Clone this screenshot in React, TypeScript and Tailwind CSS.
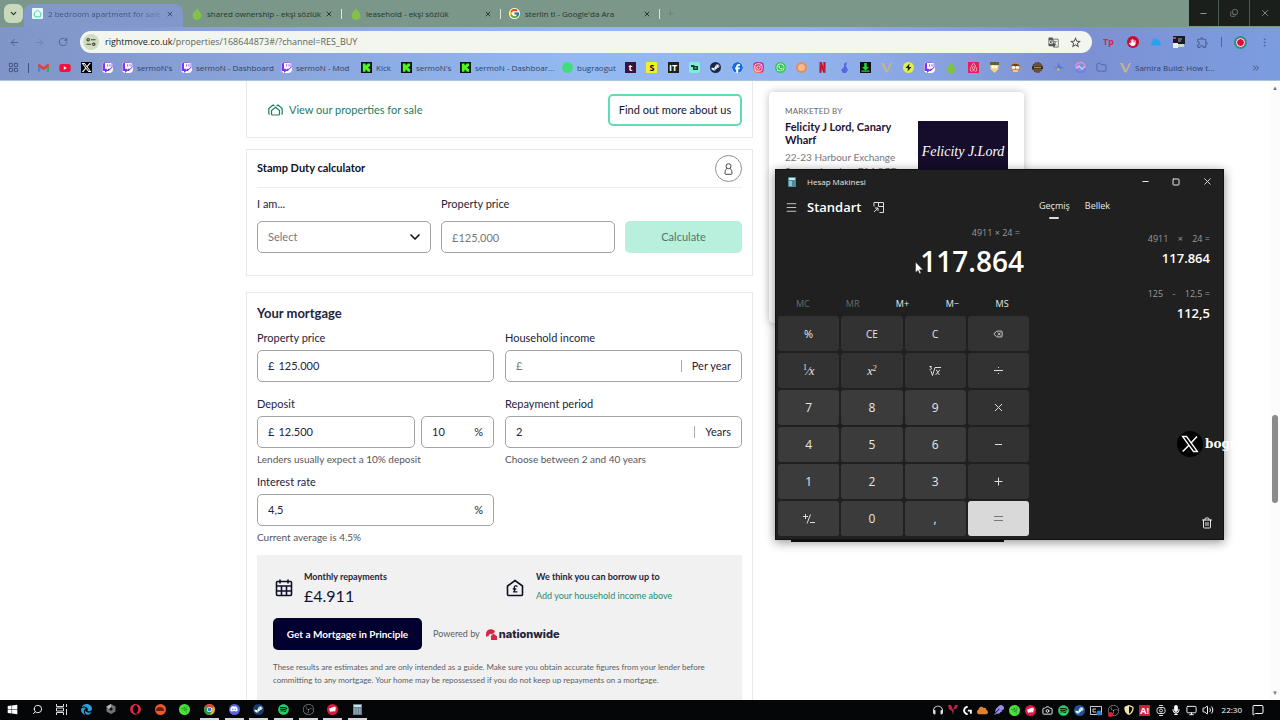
import { useId, type ReactNode } from "react";
import {
  FaTwitch, FaYoutube, FaSteamSymbol, FaFacebook, FaInstagram, FaWhatsapp, FaAirbnb, FaXTwitter,
  FaEdge, FaOpera, FaDiscord, FaSpotify, FaWindows, FaMicrophone, FaFeather, FaCloud, FaHand,
  FaHeadphones, FaShieldHalved,
} from "react-icons/fa6";
import { FcGoogle } from "react-icons/fc";
import { MdGTranslate, MdOutlineExtension, MdStarOutline } from "react-icons/md";
import { SiObsstudio, SiRazer, SiNetflix, SiLogitechg } from "react-icons/si";
import {
  ArrowLeft, ArrowRight, RotateCw, ChevronDown, X, Plus, Minus, Copy, Folder, ChevronsRight, Menu,
  Square, Trash2, Search, MessageSquare, Volume2, Monitor, MoreVertical, LayoutGrid, Camera, Delete,
} from "lucide-react";

/* ---------- shared icon drawings ---------- */

const Kick = () => (
  <svg viewBox="0 0 12 12" className="size-[11px] shrink-0">
    <rect width="12" height="12" fill="#111" />
    <path d="M2 1.500h3v2h1v-1h1v-1h3v3H9v1H8v1h1v1h1v3H7v-1H6v-1H5v2H2z" fill="#4dfa1b" />
  </svg>
);
const Drop = () => (
  <svg viewBox="0 0 12 12" className="size-[12px] shrink-0">
    <path d="M6 0C7 2.500 10.500 4.600 10.500 7.600a4.500 4.400 0 0 1-9 0C1.500 4.600 5 2.500 6 0z" fill="#81c14b" />
  </svg>
);
const House = () => (
  <svg viewBox="0 0 11 11" className="size-[11px] shrink-0">
    <rect width="11" height="11" rx="1" fill="#eefaf8" />
    <path d="M2.300 8.800H8a.8.800 0 0 0 .8-.8V5L5.500 2.200 2.200 5v3" fill="none" stroke="#35d6b0" strokeWidth="1" />
  </svg>
);
const Gmail = () => (
  <svg viewBox="0 0 12 10" className="h-[10px] w-[11px] shrink-0">
    <path d="M0 2v7h2.500V4z" fill="#4a82ea" />
    <path d="M12 2v7H9.500V4z" fill="#3ba55c" />
    <path d="M0 1.800C0 .8 1.300.2 2.200.9L6 4 9.800.9c.9-.7 2.200-.1 2.200.9v1.500L6 7.500 0 3.300z" fill="#df4438" />
  </svg>
);
const Tune = () => (
  <svg viewBox="0 0 10 10" className="size-[10px]" fill="none" stroke="#3b4438" strokeWidth="1.100">
    <circle cx="2.200" cy="2.700" r="1.200" /><path d="M5 2.700h4.500M.5 7.300H5" /><circle cx="7.800" cy="7.300" r="1.200" />
  </svg>
);
const Vee = () => (
  <svg viewBox="0 0 12 12" className="size-[11px] shrink-0">
    <path d="M0 1h3l3.500 8L10 1h2L7 11.500H5z" fill="#c8b48c" />
  </svg>
);
const Letter = ({ children, className }: { children: ReactNode; className: string }) => (
  <span className={`flex size-[11px] shrink-0 items-center justify-center text-[9px] leading-none font-bold ${className}`}>{children}</span>
);

/* ---------- browser chrome ---------- */

function Tab({ icon, title, active = false }: { icon: ReactNode; title: string; active?: boolean }) {
  return (
    <div className={`flex w-[159px] shrink-0 items-center ${active ? "mt-1 h-[23px] rounded-t-lg bg-[#8298cb] pb-1 text-[#3f5276]" : "h-[27px] text-[#26362f]"}`}>
      <span className="ml-2 flex size-[11px] shrink-0">{icon}</span>
      <span className={`ml-[5px] text-[8px] leading-3 whitespace-nowrap ${active ? "bg-linear-to-r from-[#3f5276] from-75% to-[#6c82b2] bg-clip-text text-transparent" : ""}`}>{title}</span>
      <button aria-label={`Close ${title}`} className="ml-auto flex w-3 justify-center"><X size={8} strokeWidth={3} /></button>
      <span className={`ml-[6px] h-[10px] w-px ${active ? "" : "bg-[#dce5dc]"}`} />
    </div>
  );
}

const Bookmark = ({ icon, children }: { icon: ReactNode; children: string }) => (
  <a href="#bookmark" className="flex items-center gap-[4px] whitespace-nowrap">{icon}{children}</a>
);
const tw = <FaTwitch className="size-[11px] shrink-0 rounded-sm bg-white text-[#7b34ef]" />;

function Chrome() {
  return (
    <header className="shrink-0 border-b border-[#a9c3da] bg-[linear-gradient(90deg,#8094c7_0%,#8ba8df_25%,#93b9f1_45%,#93b5ef_62%,#7c90d3_84%,#7b9de0_100%)] font-['Open_Sans','Noto_Sans',sans-serif] text-[#33435f]">
      <div className="flex h-[27px] bg-[#7a9789]">
        <button aria-label="Search tabs" className="mt-1 ml-1 mr-[1px] flex size-[19px] shrink-0 items-center justify-center rounded-md bg-[#c8dabb] text-[#26331f]"><ChevronDown size={9} strokeWidth={3} /></button>
        <Tab active icon={<House />} title="2 bedroom apartment for sale" />
        <Tab icon={<Drop />} title="shared ownership - ekşi sözlük" />
        <Tab icon={<Drop />} title="leasehold - ekşi sözlük" />
        <Tab icon={<FcGoogle className="size-[11px] rounded-full bg-white" />} title="sterlin tl - Google'da Ara" />
        <button aria-label="New tab" className="ml-[6px] text-[#6a8377]"><Plus size={9} /></button>
        <div className="ml-auto flex h-[26px] gap-px bg-[#4b5b52] text-[#8e9690]">
          <button aria-label="Minimise" className="flex w-[29px] items-center justify-center bg-[#1a1f1c]"><Minus size={9} strokeWidth={3} /></button>
          <button aria-label="Restore" className="flex w-[30px] items-center justify-center bg-[#1a1f1c]"><Copy size={8} className="-scale-x-100 rotate-180" /></button>
          <button aria-label="Close" className="flex w-[30px] items-center justify-center bg-[#1a1f1c]"><X size={10} /></button>
        </div>
      </div>
      <div className="flex h-[30px] items-center">
        <button aria-label="Back" className="ml-[9px] text-[#4a5f8c]"><ArrowLeft size={11} /></button>
        <button aria-label="Forward" className="ml-[14px] text-[#6d83b3]"><ArrowRight size={11} /></button>
        <button aria-label="Reload" className="ml-[13px] text-[#4a5f8c]"><RotateCw size={10} /></button>
        <div className="ml-3 flex h-[22px] flex-1 items-center rounded-full bg-[#f3f6ef] pr-[10px] pl-[3px]">
          <span className="flex size-[16px] items-center justify-center rounded-full bg-[#d0dcc1]"><Tune /></span>
          <p className="ml-[6px] flex-1 text-[9px] leading-4 text-[#5c655c]"><span className="text-[#222]">rightmove.co.uk</span>/properties/168644873#/?channel=RES_BUY</p>
          <button aria-label="Translate" className="mr-[10px] text-[#555]"><MdGTranslate size={11} /></button>
          <button aria-label="Bookmark this tab" className="text-[#444]"><MdStarOutline size={13} /></button>
        </div>
        <div className="mr-[10px] ml-[11px] flex w-[167px] items-center justify-between text-[#4d619c]">
          <span className="w-3 text-[9px] leading-3 font-bold text-[#d42a45]">Tp</span>
          <span className="flex size-[12px] items-center justify-center rounded-full bg-[#c90d2c] text-white"><FaHand size={7} /></span>
          <FaCloud size={10} className="text-[#27a2f0]" />
          <svg viewBox="0 0 12 12" className="size-3"><rect width="12" height="8" fill="#171b26" /><path d="M0 7h5v5H0z" fill="#eee" /><path d="M5 8h6v3H5z" fill="#c4dcd2" /><path d="M0 1h3v2H0z" fill="#d54242" /><path d="M5 3h4M5 5h3" stroke="#aaa" /></svg>
          <MdOutlineExtension size={13} />
          <span className="h-[10px] w-px bg-[#4d619c]" />
          <span className="size-[13px] rounded-full border-2 border-[#1d997f] bg-[#dc0d46] outline-1 -outline-offset-3 outline-white" />
          <MoreVertical size={11} />
        </div>
      </div>
      <nav aria-label="Bookmarks" className="flex h-[23px] items-center pb-[2px] pl-2 text-[8px] leading-3">
        <LayoutGrid size={11} className="text-[#40527b]" />
        <span className="mx-[9px] h-[10px] w-px bg-[#40527b]" />
        <div className="mr-[9px] flex items-center gap-[10px]">
          <Gmail />
          <FaYoutube className="size-[12px] bg-[linear-gradient(#fff,#fff)] bg-[length:4px_4px] bg-center bg-no-repeat text-[#f5103c]" />
          <FaXTwitter className="size-[11px] bg-black text-white" />
          {tw}
        </div>
        <div className="grid grid-cols-[59px_100px_80px_40px_59px_102px_63px]">
          <Bookmark icon={tw}>sermoN's</Bookmark>
          <Bookmark icon={tw}>sermoN - Dashboard</Bookmark>
          <Bookmark icon={tw}>sermoN - Mod</Bookmark>
          <Bookmark icon={<Kick />}>Kick</Bookmark>
          <Bookmark icon={<Kick />}>sermoN's</Bookmark>
          <Bookmark icon={<Kick />}>sermoN - Dashboar...</Bookmark>
          <Bookmark icon={<span className="size-[11px] rounded-full bg-[#42dc7c]" />}>bugraogut</Bookmark>
        </div>
        <div className="flex w-[482px] shrink-0 items-center justify-between">
          <Letter className="bg-[#3e123c] text-white">t</Letter>
          <Letter className="bg-[#f4ee2a] text-black">S</Letter>
          <Letter className="bg-[#211f1d] text-[8px] text-white">IT</Letter>
          <svg viewBox="0 0 11 11" className="size-[11px]"><rect width="11" height="11" rx="2" fill="#7eedd0" /><path d="M2 3h3l1 1h3v4H4V5H2z" fill="#153c35" /><path d="M5.500 5.500h2v1h-2z" fill="#7eedd0" /></svg>
          <span className="flex size-[11px] items-center justify-center rounded-full bg-[#17294a] text-white"><FaSteamSymbol size={9} /></span>
          <FaFacebook className="size-[11px] rounded-full bg-white text-[#146be4]" />
          <FaInstagram className="size-[11px] rounded-sm bg-linear-to-tr from-[#fca73b] via-[#dc2a74] to-[#963ac4] p-px text-white" />
          <FaWhatsapp className="size-[11px] rounded-full bg-[#2fcb58] p-px text-white" />
          <span className="size-[11px] rounded-full border-2 border-[#e08f57] bg-[#f4ba92]" />
          <SiNetflix className="size-[11px] text-[#c90d26]" />
          <svg viewBox="0 0 11 11" className="size-[11px]"><path d="M5 1.500 8 0 7 4 9 8 7 11H4L2 8l3-3z" fill="#5668e0" /></svg>
          <svg viewBox="0 0 11 11" className="size-[11px]"><rect width="11" height="11" fill="#0b120d" /><path d="M4.200 1h2.600v4H9L5.500 8.500 2 5h2.200zM1.500 8.500h8v1.300h-8z" fill="#2ad13f" /></svg>
          <Vee />
          <svg viewBox="0 0 11 11" className="size-[11px]"><circle cx="5.500" cy="5.500" r="5.500" fill="#dff04b" /><path d="M6.500 1.500 2.500 6H5l-.5 3.500L8.500 5H6z" fill="#16200d" /></svg>
          {tw}
          <Drop />
          <Letter className="bg-[#e52156] text-white"><FaAirbnb size={9} /></Letter>
          <svg viewBox="0 0 11 11" className="size-[11px]"><path d="M1 0h9v3H1z" fill="#5e6232" /><path d="M1.500 3h8v4L5.500 11l-4-4z" fill="#f3d876" /><circle cx="4" cy="5" r="1.400" fill="#fff" /><circle cx="7" cy="5" r="1.400" fill="#fff" /></svg>
          <svg viewBox="0 0 11 11" className="size-[11px]"><circle cx="5.500" cy="5.500" r="5" fill="#c98b4b" /><path d="M1 4a5 4 0 0 1 9 0z" fill="#5c4327" /><circle cx="3.500" cy="5.500" r="1.800" fill="#f2eee2" /><circle cx="7.500" cy="5.500" r="1.800" fill="#f2eee2" /><path d="M3 9h5" stroke="#fff" /></svg>
          <svg viewBox="0 0 11 11" className="size-[11px]"><circle cx="5.500" cy="5.500" r="5" fill="#6b5137" stroke="#4a3a2c" strokeDasharray="1.500 1" /><path d="M0 4.500h11v2.500H0z" fill="#2e2a26" /><path d="M2 5.700h7" stroke="#d6a23c" /></svg>
          <svg viewBox="0 0 11 11" className="size-[11px]"><path d="M5 0 7 4l4 1.500L7 7 5.500 11 4 7 0 5.500 4 4z" fill="#4d7de8" /><path d="M5 1 4 4 1 5.500 4 6z" fill="#df7b68" /><path d="m5 10-1-4 3 1z" fill="#dac65a" /></svg>
          <svg viewBox="0 0 11 11" className="size-[11px]" fill="none" strokeWidth="1.500"><path d="M.8 5A4.700 4.700 0 0 1 10 4" stroke="#e48ecb" /><path d="M10.200 6A4.700 4.700 0 0 1 1 7" stroke="#6b7cf0" /><path d="M1 6.500 4 4l3 3 3-2.500" stroke="#d3c0fa" /></svg>
          <Folder size={11} className="text-[#53669f]" />
        </div>
        <a href="#bookmark" className="ml-[13px] flex items-center gap-[4px] whitespace-nowrap"><Vee />Samira Build: How t...</a>
        <button aria-label="More bookmarks" className="mr-[19px] ml-auto"><ChevronsRight size={10} /></button>
      </nav>
    </header>
  );
}

/* ---------- property page ---------- */

interface FieldProps {
  label: string;
  value?: string;
  prefix?: string;
  suffix?: string;
  divided?: boolean;
  hint?: string;
  hideLabel?: boolean;
  className?: string;
}

function Field({ label, value, prefix, suffix, divided, hint, hideLabel, className = "" }: FieldProps) {
  const id = useId();
  return (
    <div className={`min-w-0 ${className}`}>
      <label htmlFor={id} className={`block text-[11px] leading-4 ${hideLabel ? "invisible" : ""}`}>{label}</label>
      <div className="mt-1 flex h-8 items-center rounded-[5px] border border-[#a3a3a8] bg-white px-[10px]">
        {prefix && <span className={`mr-1 ${value ? "" : "text-[#777]"}`}>{prefix}</span>}
        <input id={id} defaultValue={value} className="w-full min-w-0 bg-transparent outline-none" />
        {divided && <span className="mr-[10px] h-3 w-px shrink-0 bg-[#aaa]" />}
        {suffix && <span className="shrink-0">{suffix}</span>}
      </div>
      {hint && <p className="mt-[3px] text-[10px] leading-4 whitespace-nowrap text-[#55555c]">{hint}</p>}
    </div>
  );
}

const card = "border border-[#e9e9eb] bg-white px-[10px]";

function MainColumn() {
  return (
    <div className="flex w-[507px] shrink-0 flex-col text-[11px] text-[#24243a]">
      <section className={`${card} flex h-[57px] items-start justify-between border-t-0 pt-[13px]`}>
        <a href="#sales" className="mt-2 ml-[11px] flex items-center gap-[6px] leading-4 text-[#1f7a63]">
          <svg viewBox="0 0 15 12" className="h-3 w-[15px]" fill="none" stroke="currentColor" strokeWidth="1.200">
            <path d="M4.500 11h6a1 1 0 0 0 1-1V6.500L7.500 3.300 3.500 6.500V10a1 1 0 0 0 1 1zM1.500 10.500A1.500 1.500 0 0 1 .8 9V4.500L5 1l1.500 1M8.500 2 10 1l4.200 3.500V9a1.500 1.500 0 0 1-.7 1.500" />
          </svg>
          View our properties for sale
        </a>
        <button className="h-8 w-[134px] rounded-[5px] border-2 border-[#5fdcb5] text-[#13132c]">Find out more about us</button>
      </section>

      <section className={`${card} mt-[11px] h-[127px]`}>
        <div className="flex h-[38px] items-center justify-between border-b border-[#efeff1]">
          <h2 className="text-[11px] font-bold text-[#11112c]">Stamp Duty calculator</h2>
          <button aria-label="Account" className="flex size-[27px] items-center justify-center rounded-full border border-[#909094]">
            <svg viewBox="0 0 9 12" className="h-3 w-[9px]" fill="none" stroke="#444" strokeWidth="1"><circle cx="4.500" cy="3.200" r="2.500" /><path d="M3 5.500C1.500 6.300 1 8 1 10.500a.8.800 0 0 0 .8.800h5.400a.8.800 0 0 0 .8-.8C8 8 7.500 6.300 6 5.500" /></svg>
          </button>
        </div>
        <div className="mt-2 grid grid-cols-[174px_174px_1fr] items-end gap-x-[10px]">
          <div>
            <label htmlFor="buyer" className="block leading-4">I am...</label>
            <div className="relative mt-[9px]">
              <select id="buyer" className="h-8 w-full appearance-none rounded-[5px] border border-[#a3a3a8] bg-white px-[10px] text-[#77777b]"><option>Select</option></select>
              <ChevronDown size={16} strokeWidth={2.500} className="pointer-events-none absolute top-2 right-2 text-[#111]" />
            </div>
          </div>
          <div>
            <label htmlFor="stampPrice" className="block leading-4">Property price</label>
            <input id="stampPrice" placeholder="£125,000" className="mt-[9px] block h-8 w-full rounded-[5px] border border-[#a3a3a8] px-[10px] placeholder:text-[#77777b]" />
          </div>
          <button className="h-8 rounded-[5px] bg-[#b9f0dd] text-[#50776b]">Calculate</button>
        </div>
      </section>

      <section className={`${card} mt-4 pt-[11px]`}>
        <h2 className="text-[13px] leading-[18px] font-bold">Your mortgage</h2>
        <div className="mt-2 grid grid-cols-2 gap-x-[11px]">
          <Field label="Property price" prefix="£" value="125.000" />
          <Field label="Household income" prefix="£" suffix="Per year" divided />
          <div className="mt-[14px] grid grid-cols-[158px_1fr] gap-x-[6px]">
            <Field label="Deposit" prefix="£" value="12.500" hint="Lenders usually expect a 10% deposit" />
            <Field label="Rate" hideLabel value="10" suffix="%" />
          </div>
          <Field className="mt-[14px]" label="Repayment period" value="2" suffix="Years" divided hint="Choose between 2 and 40 years" />
          <Field className="mt-[7px]" label="Interest rate" value="4,5" suffix="%" hint="Current average is 4.5%" />
        </div>
        <div className="mt-[10px] h-[200px] bg-[#f1f1f2] px-4 pt-[14px]">
          <div className="grid grid-cols-[232px_1fr]">
            <div className="flex items-center gap-[11px]">
              <svg viewBox="0 0 18 18" className="ml-[2px] size-[18px]" fill="none" stroke="#0e0e28" strokeWidth="1.600"><rect x="1.500" y="2.500" width="15" height="14" rx="1" /><path d="M1.500 7h15M1.500 12h15M6.500 7v9M11.500 7v9M5 .5v4M13 .5v4" /></svg>
              <div>
                <h3 className="text-[9px] leading-4 font-bold">Monthly repayments</h3>
                <p className="text-[16px] leading-[22px] text-[#11112c]">£4.911</p>
              </div>
            </div>
            <div className="flex items-center gap-[12px]">
              <svg viewBox="0 0 18 18" className="ml-px size-[18px]" fill="none" stroke="#0e0e28" strokeWidth="1.600"><path d="M1.500 7v8.500a1 1 0 0 0 1 1h13a1 1 0 0 0 1-1V7L9 1.500z" /><path d="M11.300 7.700c-.5-1.200-3.300-1-3 .8l.3 2.500c0 1-.8 1.800-1.400 1.800h4.200M6.800 10h3.500" strokeWidth="1.300" /></svg>
              <div>
                <h3 className="text-[9px] leading-4 font-bold">We think you can borrow up to</h3>
                <p className="text-[9px] leading-[22px] text-[#298a70]">Add your household income above</p>
              </div>
            </div>
          </div>
          <div className="mt-[11px] flex items-center">
            <button className="h-8 w-[149px] rounded-[5px] bg-[#01002f] text-[10px] font-bold text-white">Get a Mortgage in Principle</button>
            <span className="ml-[11px] text-[9px] text-[#5c5c63]">Powered by</span>
            <svg viewBox="0 0 11 11" className="ml-[6px] size-[11px]" fill="#dc2440"><path d="M0 5.500C0 1.500 3 .3 5 .3c2 0 3.500 1 4 2.700L5.500 5.500c-1-1-2-1-2.500 1L0 8z" /><path d="m7.500 4.500 3.500 3V11H5V7z" /></svg>
            <span className="ml-[2px] font-[Inter,sans-serif] text-[11px] leading-4 font-extrabold">nationwide</span>
          </div>
          <p className="mt-[11px] w-[436px] text-[8px] leading-[13px] text-[#5c5c63]">These results are estimates and are only intended as a guide. Make sure you obtain accurate figures from your lender before committing to any mortgage. Your home may be repossessed if you do not keep up repayments on a mortgage.</p>
        </div>
      </section>
    </div>
  );
}

function AgentCard() {
  return (
    <aside className="mt-[11px] ml-4 h-[231px] w-[255px] shrink-0 rounded-[4px] bg-white px-4 pt-3 shadow-[0_0_8px_rgba(0,0,0,0.25)]">
      <p className="text-[8px] leading-[14px] tracking-wide text-[#66666c]">MARKETED BY</p>
      <div className="flex items-start justify-between">
        <div className="w-[115px]">
          <h2 className="mt-[2px] text-[11px] leading-[13px] font-bold text-[#1d1236]">Felicity J Lord, Canary Wharf</h2>
          <p className="mt-1 text-[10px] leading-[14px] whitespace-nowrap text-[#77777c]">22-23 Harbour Exchange<br />Square, London, E14 9GE</p>
        </div>
        <div className="mt-[3px] flex h-[60px] w-[90px] items-center justify-center bg-[#160c2b] font-['Liberation_Serif',serif] text-[14px] whitespace-nowrap text-white italic">Felicity J.Lord</div>
      </div>
    </aside>
  );
}

/* ---------- calculator window ---------- */

const op = "size-[9px] fill-none stroke-[#ddd] stroke-1";
const keys: { name: string; face: ReactNode; tone?: "digit" | "equal" }[] = [
  { name: "Percent", face: <span className="text-[11px]">%</span> },
  { name: "Clear entry", face: <span className="text-[10px]">CE</span> },
  { name: "Clear", face: <span className="text-[10px]">C</span> },
  { name: "Backspace", face: <Delete size={10} /> },
  { name: "Reciprocal", face: <span className="flex items-center font-['Liberation_Serif',serif]"><span className="mb-[5px] text-[8px]">1</span>⁄<span className="text-[12px] italic">x</span></span> },
  { name: "Square", face: <span className="font-['Liberation_Serif',serif] italic">x<sup className="text-[8px]">2</sup></span> },
  { name: "Root", face: <svg viewBox="0 0 12 10" className="h-[10px] w-3 fill-none stroke-[#ddd] stroke-1"><path d="M.5.500h2L1.500 2c2 0 1 2.200-1 1.700M2 5l1.500 4.500L6 1.500h6M7 4c2 0 1 4.500 3.500 4.500M11 4C9.500 4 8.500 8.500 6.500 8.500" /></svg> },
  { name: "Divide", face: <svg viewBox="0 0 9 9" className={op}><path d="M0 4.500h9M4 1.500h1M4 7.500h1" /></svg> },
  { name: "7", face: "7", tone: "digit" }, { name: "8", face: "8", tone: "digit" }, { name: "9", face: "9", tone: "digit" },
  { name: "Multiply", face: <svg viewBox="0 0 9 9" className={op}><path d="m1 1 7 7M8 1 1 8" /></svg> },
  { name: "4", face: "4", tone: "digit" }, { name: "5", face: "5", tone: "digit" }, { name: "6", face: "6", tone: "digit" },
  { name: "Subtract", face: <svg viewBox="0 0 9 9" className={op}><path d="M1 4.500h7" /></svg> },
  { name: "1", face: "1", tone: "digit" }, { name: "2", face: "2", tone: "digit" }, { name: "3", face: "3", tone: "digit" },
  { name: "Add", face: <svg viewBox="0 0 9 9" className={op}><path d="M.5 4.500h8M4.500.5v8" /></svg> },
  { name: "Negate", face: <svg viewBox="0 0 12 10" className="h-[10px] w-3 fill-none stroke-[#ddd] stroke-1"><path d="M0 2.500h5M2.500 0v5M7.500.5l-3.500 9M7 8.500h5" /></svg>, tone: "digit" },
  { name: "0", face: "0", tone: "digit" }, { name: "Decimal", face: ",", tone: "digit" },
  { name: "Equals", face: <svg viewBox="0 0 9 9" className="size-[9px] stroke-[#777] stroke-1"><path d="M0 2.500h9M0 6.500h9" /></svg>, tone: "equal" },
];
const tones = { op: "bg-[#323232]", digit: "bg-[#3b3b3b]", equal: "bg-[#d9d9d9]" };

function Calculator() {
  return (
    <div className="absolute top-[169px] left-[775px] w-[449px] font-['Open_Sans','Noto_Sans',sans-serif] text-[#e8e8e8]">
      <div className="flex h-[371px] flex-col border border-[#111] bg-[#202020] shadow-[0_2px_10px_rgba(0,0,0,0.45)]">
        <div className="flex h-[23px] shrink-0 items-center pr-[10px] pl-3 text-[8px]">
          <svg viewBox="0 0 8 10" className="mr-[11px] h-[10px] w-2"><rect width="8" height="10" rx="1" fill="#4f8a9b" /><path d="M1 1h6v2H1z" fill="#c8f0f5" /><path d="M1 4h3v5H1z" fill="#8ebfcd" /></svg>
          Hesap Makinesi
          <div className="ml-auto flex gap-[22px]">
            <button aria-label="Minimise"><Minus size={9} strokeWidth={3} /></button>
            <button aria-label="Maximise"><Square size={8} strokeWidth={3} /></button>
            <button aria-label="Close"><X size={11} /></button>
          </div>
        </div>
        <div className="flex min-h-0 flex-1">
          <div className="w-[256px] pl-[2px]">
            <div className="flex h-7 items-center pl-[7px]">
              <button aria-label="Menu"><Menu size={13} strokeWidth={1.500} /></button>
              <h2 className="ml-[9px] text-[13px] leading-4 font-semibold text-white">Standart</h2>
              <button aria-label="Keep on top" className="ml-3">
                <svg viewBox="0 0 11 11" className="size-[11px] fill-none stroke-[#ddd] stroke-1"><path d="M1 4.500V.5h9.500v10H6.500M5.500 1v3.500h4.500M1 10l4-4M2 6h3v3" /></svg>
              </button>
            </div>
            <p className="mt-1 pr-3 text-right text-[9px] leading-4 text-[#9b9b9b]">4911 × 24 =</p>
            <p className="pr-2 text-right text-[28px] leading-[41px] font-semibold text-white">117.864</p>
            <div className="mr-[5px] flex h-[34px] items-center pt-[10px]">
              {["MC", "MR", "M+", "M−", "MS"].map((m, i) => (
                <button key={m} disabled={i < 2} className="flex-1 text-[9px] font-medium disabled:text-[#6b6b6b]">{m}</button>
              ))}
            </div>
            <div className="mr-[3px] grid grid-cols-4 gap-[2px]">
              {keys.map((k) => (
                <button key={k.name} aria-label={k.name} className={`flex h-[35px] items-center justify-center rounded-[3px] text-[12px] leading-4 ${tones[k.tone ?? "op"]}`}>{k.face}</button>
              ))}
            </div>
          </div>
          <div className="flex flex-1 flex-col pr-[13px] pl-[7px] text-right">
            <div className="flex gap-[15px] text-[9px] leading-4 font-medium">
              <button className="mt-[5px] flex flex-col items-center">Geçmiş<span className="mt-[3px] h-[2px] w-[10px] rounded bg-[#ddd]" /></button>
              <button className="mt-[5px] self-start">Bellek</button>
            </div>
            <p className="mt-3 text-[9px] leading-4 whitespace-pre text-[#9b9b9b]">4911    ×    24 =</p>
            <p className="mt-[2px] text-[13px] leading-[18px] font-semibold text-white">117.864</p>
            <p className="mt-[19px] text-[9px] leading-4 whitespace-pre text-[#9b9b9b]">125    -    12,5 =</p>
            <p className="mt-[2px] text-[13px] leading-[18px] font-semibold text-white">112,5</p>
            <button aria-label="Clear history" className="-mr-[3px] mt-auto mb-[10px] self-end"><Trash2 size={12} /></button>
          </div>
        </div>
      </div>
      <div className="ml-4 h-[2px] w-[213px] bg-[#0d0d0d]" />
      <svg viewBox="0 0 8 12" className="absolute top-[93px] left-[140px] h-3 w-2"><path d="M.5 0v10.500l2.500-2 1.500 3.200 1.500-.7-1.500-3.200H8z" fill="#fff" stroke="#222" strokeWidth=".5" /></svg>
    </div>
  );
}

function Handle() {
  return (
    <div className="absolute top-[431px] left-[1177px] flex items-center gap-[2px]">
      <span className="flex size-[26px] items-center justify-center rounded-full bg-black text-white">
        <svg viewBox="0 0 18 18" className="size-[18px]" fill="none" stroke="#fff"><path d="M1.500 1.500h4l11 15h-4z" strokeWidth="1.300" /><path d="m16 1.500-6 6.500M8 10.300l-6.300 6.200" strokeWidth="1.500" /></svg>
      </span>
      <span className="font-['DejaVu_Serif',serif] text-[12px] leading-4 font-bold text-white">bogu264</span>
    </div>
  );
}

/* ---------- desktop taskbar ---------- */

const Task = ({ children, open = false }: { children: ReactNode; open?: boolean }) => (
  <span className={`flex h-5 w-[19px] items-center justify-center border-b-2 ${open ? "border-[#d5d9df]" : "border-transparent"}`}>{children}</span>
);
const Disc = ({ children, className }: { children?: ReactNode; className: string }) => (
  <span className={`flex size-[11px] shrink-0 items-center justify-center rounded-full ${className}`}>{children}</span>
);
const riot = <svg viewBox="0 0 8 8" className="size-[7px]"><path d="m0 3 6-2.500L8 2 7 6l-2 .2-.3-1.700-.3 1.900H3L2.600 5l.1 1.600H1.300z" fill="#fff" /></svg>;

function Taskbar() {
  return (
    <footer className="flex h-5 shrink-0 items-center justify-between bg-[#050607] font-['Open_Sans',sans-serif] text-white">
      <div className="ml-[3px] flex w-[364px] justify-between">
        <Task><FaWindows size={11} /></Task>
        <Task><Search size={11} className="-scale-x-100" /></Task>
        <Task><svg viewBox="0 0 12 11" className="h-[11px] w-3" fill="none" stroke="#ddd"><path d="M.5 0v2.500h7V0M.5 11V8.500h7V11M.5 4h7v3h-7zM10.500 0v3M10.500 5v6" /></svg></Task>
        <Task><FaEdge size={11} className="text-[#2a9fd8]" /></Task>
        <Task><svg viewBox="0 0 10 10" className="size-[10px]"><path d="M5 0l4.500 2.500v5L5 10 .5 7.500v-5z" fill="#70757a" /><path d="M5 3l2 2-2 2-2-2z" fill="#111" /><path d="M5 0v3l-2 2-2.500-2.500z" fill="#b5b8bb" /></svg></Task>
        <Task><FaOpera size={11} className="text-[#ed2747]" /></Task>
        <Task><Disc className="bg-[#e9592a]"><span className="h-1 w-2 rounded-t-full bg-[#671f10]" /></Disc></Task>
        <Task><Disc className="bg-[#4be33a] text-[#0c3f12]"><SiRazer size={7} /></Disc></Task>
        <Task open><svg viewBox="0 0 12 12" className="size-[11px]"><circle cx="6" cy="6" r="6" fill="#e2b72c" /><path d="M6 6 .8 3A6 6 0 0 1 11.200 3z" fill="#dd4436" /><path d="M6 6 .8 3A6 6 0 0 0 6 12l3-4.500z" fill="#27984d" /><circle cx="6" cy="6" r="2.800" fill="#fff" /><circle cx="6" cy="6" r="2.100" fill="#3e7be0" /></svg></Task>
        <Task open><Disc className="bg-[#5661e8]"><FaDiscord size={8} /></Disc></Task>
        <Task open><Disc className="bg-[#173d70]"><FaSteamSymbol size={9} /></Disc></Task>
        <Task open><FaSpotify size={11} className="text-[#25cf63]" /></Task>
        <Task open><SiObsstudio size={11} className="text-[#aaa]" /></Task>
        <Task open><Disc className="bg-[#e21843]">{riot}</Disc></Task>
        <Task open><svg viewBox="0 0 9 11" className="h-[11px] w-[9px]"><rect width="9" height="11" fill="#68808c" /><path d="M1 1h7v2H1z" fill="#c8e6ef" /><path d="M1 5h7M1 7h7M1 9h7" stroke="#b6cbd4" strokeDasharray="1.500 1" /></svg></Task>
      </div>
      <div className="flex items-center">
        <div className="flex w-[282px] items-center justify-between">
          <FaHeadphones size={10} className="text-[#ddd]" />
          <svg viewBox="0 0 10 10" className="size-[10px]"><path d="M0 0h3l2 5 2-5h3L8 4H6L5 10 4 6 1 4z" fill="#bf2549" /></svg>
          <SiLogitechg size={9} />
          <FaCloud size={11} className="text-[#e1812f]" />
          <FaFeather size={10} className="text-[#9a87f0]" />
          <Disc className="bg-[#4be33a] text-[#0c3f12]"><SiRazer size={7} /></Disc>
          <Disc className="bg-[#e21843]">{riot}</Disc>
          <Camera size={11} />
          <FaSpotify size={11} className="text-[#25cf63]" />
          <Disc className="bg-[#1b5598]"><FaSteamSymbol size={9} /></Disc>
          <svg viewBox="0 0 12 11" className="h-[11px] w-3" fill="none" stroke="#ccc"><path d="M.5 1.500h11v8H.5zM3 4h3M3 4v3h3" /><circle cx="9" cy="8" r="2.500" fill="#2c7ad1" stroke="none" /></svg>
          <span className="relative"><SiObsstudio size={11} className="text-[#bbb]" /><span className="absolute -bottom-px left-0 size-[5px] rounded-full bg-[#d62138]" /></span>
          <FaShieldHalved size={10} className="text-[#f0e2a8]" />
          <Letter className="bg-[#d71a3b] text-[7px] text-white">A!</Letter>
          <svg viewBox="0 0 10 11" className="h-[11px] w-[10px]" fill="none" stroke="#ddd"><rect x="1" y="2.500" width="8" height="6" rx="2" /><circle cx="5" cy="5.500" r="1.500" /><path d="M3 .5h4M3 10.500h4" /></svg>
          <FaMicrophone size={10} />
          <Monitor size={11} />
          <Volume2 size={12} />
        </div>
        <time className="ml-[7px] text-[8px] leading-4">22:30</time>
        <button aria-label="Notifications" className="mr-4 ml-[10px]"><MessageSquare size={12} /></button>
      </div>
    </footer>
  );
}

export default function App() {
  return (
    <div className="relative flex h-screen flex-col overflow-hidden bg-white font-[Lato,sans-serif]">
      <Chrome />
      <div className="flex min-h-0 flex-1">
        <main className="flex min-w-0 flex-1 items-start justify-center overflow-hidden">
          <MainColumn />
          <AgentCard />
        </main>
        <div className="flex w-[10px] shrink-0 flex-col items-center bg-[#fcfcfc] py-1 text-[6px] leading-none text-[#777]">
          <span>▲</span>
          <span className="mt-[324px] h-[88px] w-[6px] rounded-full bg-[#8b8b8b]" />
          <span className="mt-auto">▼</span>
        </div>
      </div>
      <Taskbar />
      <Calculator />
      <Handle />
    </div>
  );
}
